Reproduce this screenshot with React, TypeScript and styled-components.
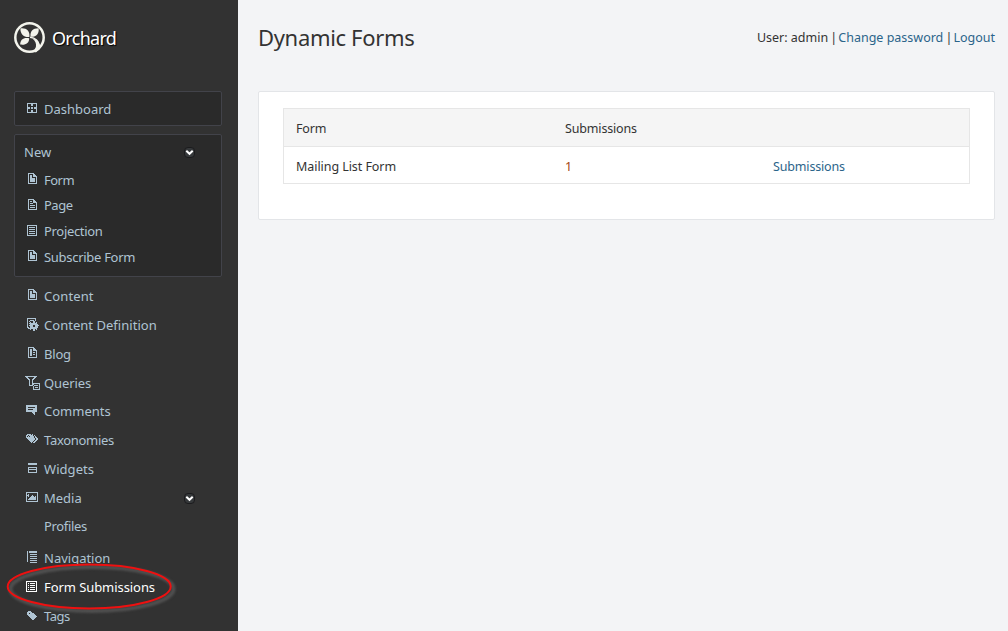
import React from "react";
import styled, { createGlobalStyle, css } from "styled-components";

const GlobalStyle = createGlobalStyle`
  * { box-sizing: border-box; }
  body {
    margin: 0;
    background: #f3f4f6;
    font-family: "Noto Sans", "Open Sans", sans-serif;
    font-size: 13px;
    color: #333;
  }
`;

/* Each icon is a small bitmap: "#" is a filled pixel. */
const icons: Record<string, string[]> = {
  dashboard: [
    "##########",
    "#...##...#",
    "#...##...#",
    "#........#",
    "###.##.###",
    "###.##.###",
    "#........#",
    "#...##...#",
    "#...##...#",
    "##########",
  ],
  form: [
    "######...",
    "#....##..",
    "#.##.###.",
    "#.##.####",
    "#.##....#",
    "#.#####.#",
    "#.#####.#",
    "#.#####.#",
    "#.#####.#",
    "#.......#",
    "#########",
  ],
  page: [
    "######...",
    "#....##..",
    "#.##.###.",
    "#....####",
    "#.###...#",
    "#.......#",
    "#.#####.#",
    "#.......#",
    "#.#####.#",
    "#.......#",
    "#########",
  ],
  list: [
    "##########",
    "#........#",
    "#.######.#",
    "#........#",
    "#.######.#",
    "#........#",
    "#.######.#",
    "#........#",
    "#.######.#",
    "#........#",
    "##########",
  ],
  definition: [
    "#########...",
    "#.......#...",
    "#..####.#...",
    "#.#...##....",
    "#..#..##.#..",
    "#.########..",
    "#..########.",
    "#.####..####",
    "#..###..###.",
    "##.########.",
    ".#########..",
    "...#..##.#..",
    "......##....",
  ],
  blog: [
    "######...",
    "#....##..",
    "#.##.###.",
    "#.##.####",
    "#.##....#",
    "#.##.##.#",
    "#.##....#",
    "#.##.##.#",
    "#.##....#",
    "#.......#",
    "#########",
  ],
  queries: [
    "############...",
    ".##......##....",
    "..##....##.....",
    "...##..##......",
    "....#..#.......",
    "....#..#.......",
    "....#..#.......",
    "....#..########",
    "....#..##.....#",
    "....####.####.#",
    "........#.....#",
    "........#.###.#",
    "........#.....#",
    "........#######",
  ],
  comments: [
    "###########",
    "###########",
    "##.......##",
    "###########",
    "##.....####",
    "###########",
    "###########",
    "......###..",
    ".......##..",
    "........#..",
  ],
  taxonomies: [
    ".####.#.....",
    "##.####.#...",
    "#.#.####.#..",
    "########.##.",
    ".########.##",
    "..#######.##",
    "...#####.##.",
    "....###.##..",
    ".....#.##...",
  ],
  widgets: [
    "#########",
    "#########",
    ".........",
    ".........",
    "#########",
    "#.......#",
    "#########",
    "#.......#",
    "#.......#",
    "#########",
  ],
  media: [
    "############",
    "#..........#",
    "#.#........#",
    "###...#....#",
    "#.#..###.#.#",
    "#...######.#",
    "#..#######.#",
    "#.########.#",
    "#..........#",
    "############",
  ],
  navigation: [
    "#.########",
    "#.########",
    "#.........",
    "#..#######",
    "#.........",
    "#..#######",
    "#.........",
    "#..#######",
    "#.........",
    "#..#######",
    "#.........",
    "...#######",
  ],
  submissions: [
    "###########",
    "#.........#",
    "#.#.#####.#",
    "#.........#",
    "#.#.#####.#",
    "#.........#",
    "#.#.#####.#",
    "#.........#",
    "#.#.#####.#",
    "#.........#",
    "###########",
  ],
  tag: [
    ".###......",
    "#####.....",
    "##.####...",
    "########..",
    ".########.",
    "..########",
    "...######.",
    "....####..",
    ".....##...",
  ],
};

const IconSvg = styled.svg`
  display: block;
  flex: none;
`;

function PixelIcon({ name }: { name: string }) {
  const rows = icons[name];
  let d = "";
  rows.forEach((row, y) => {
    for (const run of row.matchAll(/#+/g)) {
      d += `M${run.index} ${y}h${run[0].length}v1h-${run[0].length}z`;
    }
  });
  return (
    <IconSvg width={rows[0].length} height={rows.length} fill="currentColor" shapeRendering="crispEdges">
      <path d={d} />
    </IconSvg>
  );
}

const Page = styled.div`
  display: flex;
  height: 631px;
  overflow: hidden;
`;

const Sidebar = styled.aside`
  position: relative;
  flex: none;
  width: 238px;
  background: #323232;
  color: #afc4d3;
`;

const Brand = styled.header`
  display: flex;
  align-items: center;
  gap: 7px;
  height: 91px;
  padding: 0 0 16px 14px;
`;

const BrandName = styled.span`
  font-size: 18px;
  line-height: 24px;
  letter-spacing: -0.7px;
  color: #fff;
  text-shadow: 1px 1px 1px #000;
`;

const Panel = styled.section<{ $height: number }>`
  height: ${(p) => p.$height}px;
  width: 208px;
  margin: 0 0 8px 14px;
  border: 1px solid #42434a;
  border-radius: 2px;
  background: #2a2a2a;
`;

const Menu = styled.nav`
  margin-top: -4px;
`;

const Item = styled.a<{ $height: number; $active?: boolean }>`
  display: flex;
  align-items: center;
  height: ${(p) => p.$height}px;
  ${(p) => p.$active && css`color: #fff;`}
`;

const IconSlot = styled.span<{ $left: number; $top: number }>`
  align-self: flex-start;
  width: 44px;
  flex: none;
  padding: ${(p) => p.$top}px 0 0 ${(p) => p.$left}px;
`;

const PanelItems = styled.div`
  margin-left: -15px;
`;

const Label = styled.span<{ $spacing?: number }>`
  line-height: 18px;
  white-space: nowrap;
  ${(p) => p.$spacing !== undefined && css`letter-spacing: ${p.$spacing}px;`}
`;

const PanelTitle = styled.div`
  display: flex;
  align-items: center;
  height: 34px;
  margin-bottom: -2px;
  padding-left: 9px;
`;

const Toggle = styled.svg`
  display: block;
  margin: 1px 43px 0 auto;
`;

function Chevron() {
  return (
    <Toggle width="11" height="11" viewBox="0 0 11 11">
      <rect x=".5" y=".5" width="10" height="10" rx="3.500" fill="#36393b" stroke="#1b1b1d" />
      <path d="M2.300 3.800 5.500 6.800l3.200-3" fill="none" stroke="#fff" strokeWidth="2" />
    </Toggle>
  );
}

const NewToggle = styled.div`
  margin-left: auto;
  margin-right: -17px;
`;

const Marker = styled.svg`
  position: absolute;
  left: 0;
  top: 556px;
`;

const MarkerShadow = styled.ellipse`
  filter: blur(1.3px);
`;

const Main = styled.main`
  flex: 1;
  padding: 0 13px 0 20px;
`;

const TopBar = styled.div`
  display: flex;
  justify-content: space-between;
  align-items: center;
  height: 91px;
  padding-bottom: 16px;
`;

const Title = styled.h1`
  margin: 0 0 2px;
  font-size: 22px;
  font-weight: 400;
  line-height: 30px;
  letter-spacing: -0.33px;
`;

const Account = styled.div`
  line-height: 18px;
  font-size: 12.5px;
  white-space: nowrap;
`;

const Separator = styled.span`
  white-space: pre;
  letter-spacing: -1.1px;
`;

const Link = styled.a`
  color: #2b648a;
`;

const Card = styled.section`
  height: 129px;
  padding: 16px 24px;
  border: 1px solid #e3e5e8;
  border-radius: 2px;
  background: #fff;
`;

const Table = styled.div`
  border: 1px solid #e6e6e6;
  font-size: 12.5px;
  letter-spacing: -0.16px;
`;

const Row = styled.div<{ $head?: boolean }>`
  display: grid;
  grid-template-columns: 269px 208px 1fr;
  align-items: center;
  height: ${(p) => (p.$head ? 38 : 36)}px;
  padding: ${(p) => (p.$head ? 2 : 4)}px 0 0 12px;
  ${(p) => p.$head && css`
    background: #f5f5f5;
    border-bottom: 1px solid #e6e6e6;
  `}
`;

const Count = styled(Label)`
  color: #a4450f;
`;

type Entry = { icon?: string; x?: number; y?: number; text: string; h: number; sp?: number; toggle?: boolean; active?: boolean };

const newItems: Entry[] = [
  { icon: "form", x: 28, y: 6, text: "Form", h: 25, sp: -0.5 },
  { icon: "page", x: 28, y: 7, text: "Page", h: 26, sp: -0.5 },
  { icon: "list", x: 27, y: 7, text: "Projection", h: 26, sp: -0.32 },
  { icon: "form", x: 28, y: 6, text: "Subscribe Form", h: 26, sp: -0.29 },
];

const menuItems: Entry[] = [
  { icon: "form", x: 28, y: 8, text: "Content", h: 29, sp: 0.1 },
  { icon: "definition", x: 27, y: 8, text: "Content Definition", h: 29, sp: 0.03 },
  { icon: "blog", x: 28, y: 8, text: "Blog", h: 29, sp: -0.2 },
  { icon: "queries", x: 25, y: 8, text: "Queries", h: 29, sp: -0.1 },
  { icon: "comments", x: 26, y: 8, text: "Comments", h: 28 },
  { icon: "taxonomies", x: 26, y: 9, text: "Taxonomies", h: 29, sp: -0.3 },
  { icon: "widgets", x: 28, y: 9, text: "Widgets", h: 29, sp: 0.05 },
  { icon: "media", x: 26, y: 9, text: "Media", h: 29, toggle: true },
  { text: "Profiles", h: 28, sp: -0.35 },
  { icon: "navigation", x: 27, y: 11, text: "Navigation", h: 35 },
  { icon: "submissions", x: 26, y: 6, text: "Form Submissions", h: 24, sp: -0.07, active: true },
  { icon: "tag", x: 27, y: 12, text: "Tags", h: 33, sp: -0.5 },
];

function MenuEntry({ e }: { e: Entry }) {
  return (
    <Item $height={e.h} $active={e.active}>
      <IconSlot $left={e.x ?? 0} $top={e.y ?? 0}>{e.icon && <PixelIcon name={e.icon} />}</IconSlot>
      <Label $spacing={e.sp}>{e.text}</Label>
      {e.toggle && <Chevron />}
    </Item>
  );
}

export default function App() {
  return (
    <Page>
      <GlobalStyle />
      <Sidebar>
        <Brand>
          <svg width="31" height="32" viewBox="0 0 31 32" fill="#f3f4ec">
            <circle cx="15.500" cy="15.500" r="14.200" fill="none" stroke="#f3f4ec" strokeWidth="2.500" />
            <path d="M15.400 15C9.500 15.500 6.400 12 6.400 6.400c6-.8 9.600 2.600 9 8.600z" />
            <path d="M16.600 14.800c-.8-5.400 2-8.600 8-8.600.8 5.600-2.400 9-8 8.600z" />
            <path d="M15.200 16.200c0 4.800-3.400 7.200-9 6.400-.2-4.800 3.400-7.600 9-6.400z" />
            <path d="M16 15.200c5.500.6 9 4 9 8.500" fill="none" stroke="#f3f4ec" strokeWidth="1.400" />
            <path d="M18.500 16.500c3 2.500 4 5 3.400 8.500l-2.200 4 2.100 1.500 4.200-3.500v-4c-1-3.500-3-5.500-7.500-6.500z" />
          </svg>
          <BrandName>Orchard</BrandName>
        </Brand>
        <Panel $height={35}>
          <PanelItems>
            <MenuEntry e={{ icon: "dashboard", x: 27, y: 11, text: "Dashboard", h: 34 }} />
          </PanelItems>
        </Panel>
        <Panel $height={143}>
          <PanelTitle>
            <Label>New</Label>
            <NewToggle>
              <Chevron />
            </NewToggle>
          </PanelTitle>
          <PanelItems>{newItems.map((e) => <MenuEntry key={e.text} e={e} />)}</PanelItems>
        </Panel>
        <Menu>{menuItems.map((e) => <MenuEntry key={e.text} e={e} />)}</Menu>
        <Marker width="190" height="62" fill="none">
          <MarkerShadow cx="92" cy="33" rx="81.500" ry="22" stroke="#505050" strokeWidth="4" />
          <ellipse cx="89.200" cy="30.500" rx="81.500" ry="22" stroke="#ee1010" strokeWidth="2" />
        </Marker>
      </Sidebar>
      <Main>
        <TopBar>
          <Title>Dynamic Forms</Title>
          <Account>
            User: admin<Separator> | </Separator>
            <Link>Change password</Link>
            <Separator> | </Separator>
            <Link>Logout</Link>
          </Account>
        </TopBar>
        <Card>
          <Table>
            <Row $head>
              <Label>Form</Label>
              <Label>Submissions</Label>
            </Row>
            <Row>
              <Label $spacing={-0.06}>Mailing List Form</Label>
              <Count>1</Count>
              <Label as={Link}>Submissions</Label>
            </Row>
          </Table>
        </Card>
      </Main>
    </Page>
  );
}
